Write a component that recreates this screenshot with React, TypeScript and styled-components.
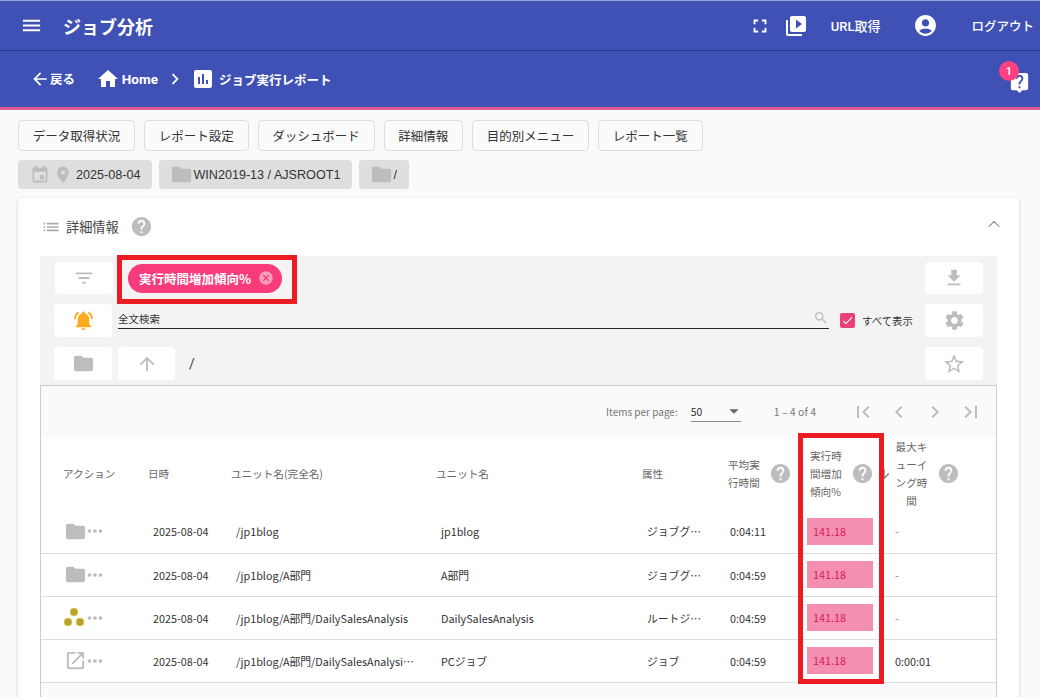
import React from 'react';
import styled, { createGlobalStyle } from 'styled-components';
import { ChevronUp } from 'lucide-react';
import {
  MdMenu, MdArrowBack, MdHome, MdChevronRight, MdChevronLeft, MdAssessment, MdFullscreen, MdVideoLibrary,
  MdAccountCircle, MdLiveHelp, MdEvent, MdPlace, MdFolder, MdList, MdHelp, MdFilterList,
  MdCancel, MdFileDownload, MdNotificationsActive, MdSearch, MdCheck, MdSettings, MdArrowUpward,
  MdStarBorder, MdArrowDropDown, MdFirstPage, MdLastPage, MdMoreHoriz, MdOpenInNew, MdArrowDownward,
} from 'react-icons/md';

const GlobalStyle = createGlobalStyle`
  html, body { margin: 0; padding: 0; height: 100%; overflow: hidden; background: #fafafa; }
  body { font-family: Roboto, "Noto Sans CJK JP", sans-serif; color: #333; }
  * { box-sizing: border-box; }
`;

const Page = styled.div`
  position: relative;
  width: 1040px;
  height: 697px;
  overflow: hidden;
`;

const Header = styled.header`
  background: #3f51b5;
  color: #fff;
  border-top: 1px solid #9aa4d8;
  border-bottom: 3px solid #e05a9a;
`;

const TopBar = styled.div`
  height: 50px;
  padding: 0 6px 0 20px;
  display: flex;
  align-items: center;
  border-bottom: 1px solid #2c3a86;
`;

const Title = styled.h1`
  margin: 0 0 0 20px;
  font-size: 18px;
  font-weight: 700;
  flex: 1;
`;

const TopText = styled.span<{ $left: number; $size: number }>`
  margin-left: ${p => p.$left}px;
  font-size: ${p => p.$size}px;
  font-weight: 500;
`;

const IconSlot = styled.span<{ $left?: number; $color?: string }>`
  margin-left: ${p => p.$left ?? 0}px;
  display: flex;
  flex: none;
  color: ${p => p.$color ?? 'inherit'};
`;

const NavBar = styled.div`
  height: 56px;
  padding: 0 9px 0 30px;
  display: flex;
  align-items: center;
  font-weight: 700;
`;

const NavText = styled.span<{ $size: number; $left?: number }>`
  font-size: ${p => p.$size}px;
  margin-left: ${p => p.$left ?? 0}px;
`;

const HelpBubble = styled.div`
  position: relative;
  margin-left: auto;
  margin-top: 7px;
  display: flex;
`;

const Badge = styled.span`
  position: absolute;
  left: -9px;
  top: -10px;
  width: 20px;
  height: 20px;
  border-radius: 50%;
  background: #ff4081;
  font-size: 11px;
  font-weight: 500;
  display: flex;
  align-items: center;
  justify-content: center;
`;

const Main = styled.main`
  padding: 10px 21px 0 18px;
`;

const ButtonRow = styled.div`
  display: flex;
  gap: 9px;
`;

const TabButton = styled.button`
  height: 31px;
  padding: 0 13.75px;
  background: #fafafa;
  border: 1px solid #ddd;
  border-radius: 4px;
  font-family: "Noto Sans CJK JP", sans-serif;
  font-size: 12.5px;
  color: #333;
`;

const ChipRow = styled.div`
  display: flex;
  gap: 7px;
  margin-top: 9px;
`;

const InfoChip = styled.div<{ $pad: number }>`
  height: 29px;
  padding: 0 12px 0 ${p => p.$pad}px;
  background: #dedede;
  border-radius: 4px;
  display: flex;
  align-items: center;
  font-family: "Liberation Sans", "Noto Sans CJK JP", sans-serif;
  font-size: 12.6px;
  color: #333;
`;

const ChipText = styled.span<{ $left: number }>`
  margin-left: ${p => p.$left}px;
`;

const Card = styled.section`
  margin-top: 9px;
  height: 540px;
  background: #fff;
  box-shadow: 0 1px 3px rgba(0, 0, 0, 0.18);
  padding: 0 22px;
`;

const CardTitle = styled.div`
  height: 58px;
  padding: 0 0 1px 1px;
  display: flex;
  align-items: center;
  font-family: "Noto Sans CJK JP", sans-serif;
  font-size: 13.2px;
  color: #444;
`;

const Collapse = styled.span`
  margin: 0 -7px 6px auto;
  display: flex;
  color: #777;
`;

const Toolbar = styled.div`
  background: #f3f3f3;
  padding: 6px 14px 5px;
  display: flex;
  flex-direction: column;
  gap: 10px;
`;

const ToolRow = styled.div<{ $h?: number }>`
  display: flex;
  align-items: center;
  height: ${p => p.$h ?? 33}px;
`;

const ToolButton = styled.div<{ $w?: number; $h?: number; $left?: number }>`
  width: ${p => p.$w ?? 58}px;
  height: ${p => p.$h ?? 33}px;
  margin-left: ${p => p.$left ?? 0}px;
  flex: none;
  background: #fff;
  border-radius: 4px;
  display: flex;
  align-items: center;
  justify-content: center;
  color: #bdbdbd;
`;

const Highlight = styled.div`
  position: relative;
  margin-left: 15px;
`;

const PinkChip = styled.div`
  height: 29px;
  width: 154px;
  padding: 0 8px 0 11px;
  background: #f83c7b;
  border-radius: 15px;
  color: #fff;
  font-family: "Noto Sans CJK JP", sans-serif;
  font-size: 12.5px;
  font-weight: 700;
  display: flex;
  align-items: center;
  justify-content: space-between;
  svg { color: #f99dbd; }
`;

const RedFrame = styled.div`
  position: absolute;
  border: 5px solid #ec1c24;
  pointer-events: none;
`;

const ChipFrame = styled(RedFrame)`
  left: -11px;
  right: -15px;
  top: -9px;
  bottom: -11px;
`;

const ColumnFrame = styled(RedFrame)`
  left: 798px;
  top: 433px;
  width: 86px;
  height: 251px;
`;

const SearchField = styled.div`
  align-self: flex-start;
  position: relative;
  margin-left: 6px;
  width: 711px;
  height: 25px;
  padding-top: 7px;
  border-bottom: 1px solid #222;
  font-family: "Noto Sans CJK JP", sans-serif;
  font-size: 10.5px;
  line-height: 15px;
  color: #333;
`;

const SearchMark = styled.span`
  position: absolute;
  right: 0;
  top: 6px;
  display: flex;
  color: #bdbdbd;
`;

const Check = styled.span`
  margin-left: 11px;
  width: 15px;
  height: 15px;
  border-radius: 2px;
  background: #ec407a;
  display: flex;
  align-items: center;
  justify-content: center;
  color: #fff;
`;

const CheckLabel = styled.span`
  margin-left: 7px;
  font-family: "Noto Sans CJK JP", sans-serif;
  font-size: 10.4px;
  color: #333;
`;

const PathText = styled.span`
  margin-left: 14px;
  font-size: 14px;
  color: #444;
`;

const RightSlot = styled.div`
  margin-left: auto;
`;

const TableBox = styled.div`
  border-left: 1px solid #ccc;
  border-right: 1px solid #ccc;
  border-top: 1px solid #ccc;
  background: #fafafa;
  height: 320px;
`;

const Paginator = styled.div`
  height: 51px;
  display: flex;
  align-items: center;
  justify-content: flex-end;
  padding-right: 13px;
  font-family: "Noto Sans CJK JP", Roboto, sans-serif;
  font-size: 10.5px;
  color: #777;
`;

const PerPageLabel = styled.span`
  font-size: 10px;
`;

const PageSelect = styled.div`
  margin-left: 13px;
  width: 50px;
  height: 20px;
  border-bottom: 1px solid #888;
  display: flex;
  align-items: center;
  justify-content: space-between;
  color: #333;
  svg { color: #666; margin-right: -4px; }
`;

const RangeText = styled.span`
  margin: 0 35px 0 33px;
`;

const PagerIcons = styled.div`
  display: flex;
  gap: 12px;
  color: #bdbdbd;
`;

const Table = styled.table`
  width: 955px;
  table-layout: fixed;
  border-collapse: collapse;
  background: #fff;
  font-family: "Noto Sans CJK JP", sans-serif;
  font-size: 10.8px;
`;

const HeadCell = styled.th<{ $w: number; $pad?: number }>`
  width: ${p => p.$w}px;
  height: 73px;
  padding: 0 0 0 ${p => p.$pad ?? 5}px;
  text-align: left;
  font-size: 10.6px;
  font-weight: 400;
  color: #666;
  line-height: 18px;
`;

const HeadInner = styled.div`
  display: flex;
  align-items: center;
  color: #bdbdbd;
`;

const HeadLabel = styled.span<{ $center?: boolean }>`
  width: ${p => (p.$center ? 33 : 34)}px;
  flex: none;
  color: #666;
  text-align: ${p => (p.$center ? 'center' : 'left')};
`;

const Row = styled.tr`
  height: 43px;
  border-bottom: 1px solid #ddd;
`;

const Cell = styled.td<{ $pad?: number; $right?: number }>`
  padding: 0 ${p => p.$right ?? 0}px 0 ${p => p.$pad ?? 10}px;
  color: #333;
  white-space: nowrap;
  overflow: hidden;
  text-overflow: ellipsis;
`;

const ActionBox = styled.div`
  display: flex;
  align-items: center;
  padding-left: 22px;
  color: #bdbdbd;
`;

const ActionDots = styled(MdMoreHoriz)`
  flex: none;
  margin-left: -3px;
`;

const TrendCell = styled.td`
  padding: 0 17px 0 2px;
`;

const TrendBar = styled.div`
  height: 27px;
  padding-left: 6px;
  background: #f48fb1;
  color: #d81b60;
  line-height: 27px;
`;

const QueueCell = styled(Cell)<{ $muted?: boolean }>`
  padding-left: 5px;
  color: ${p => (p.$muted ? '#888' : '#333')};
`;

const JobNetIcon = () => (
  <svg width="23" height="24" viewBox="0 0 23 24">
    <circle cx="10" cy="6" r="4" fill="#b8a22d" stroke="#e6de5c" strokeWidth="0.6" />
    <circle cx="4" cy="16" r="4" fill="#b8a22d" stroke="#e6de5c" strokeWidth="0.6" />
    <circle cx="16" cy="16" r="4" fill="#b8a22d" stroke="#e6de5c" strokeWidth="0.6" />
  </svg>
);

const rows = [
  { icon: <MdFolder size={23} />, path: '/jp1blog', name: 'jp1blog', attr: 'ジョブグループ', avg: '0:04:11', queue: '-' },
  { icon: <MdFolder size={23} />, path: '/jp1blog/A部門', name: 'A部門', attr: 'ジョブグループ', avg: '0:04:59', queue: '-' },
  { icon: <JobNetIcon />, path: '/jp1blog/A部門/DailySalesAnalysis', name: 'DailySalesAnalysis', attr: 'ルートジョブネット', avg: '0:04:59', queue: '-' },
  { icon: <MdOpenInNew size={23} />, path: '/jp1blog/A部門/DailySalesAnalysis/PCジョブ', name: 'PCジョブ', attr: 'ジョブ', avg: '0:04:59', queue: '0:00:01' },
];

const tabs = ['データ取得状況', 'レポート設定', 'ダッシュボード', '詳細情報', '目的別メニュー', 'レポート一覧'];

export default function App() {
  return (
    <Page>
      <GlobalStyle />
      <Header>
        <TopBar>
          <MdMenu size={23} />
          <Title>ジョブ分析</Title>
          <IconSlot><MdFullscreen size={22} /></IconSlot>
          <IconSlot $left={13}><MdVideoLibrary size={24} /></IconSlot>
          <TopText $left={23} $size={13}>URL取得</TopText>
          <IconSlot $left={33}><MdAccountCircle size={25} /></IconSlot>
          <TopText $left={33} $size={12.5}>ログアウト</TopText>
        </TopBar>
        <NavBar>
          <MdArrowBack size={20} />
          <NavText $size={12.4}>戻る</NavText>
          <IconSlot $left={21}><MdHome size={24} /></IconSlot>
          <NavText $size={13.5} $left={2}>Home</NavText>
          <IconSlot $left={6}><MdChevronRight size={22} /></IconSlot>
          <IconSlot $left={5}><MdAssessment size={24} /></IconSlot>
          <NavText $size={12.5} $left={4}>ジョブ実行レポート</NavText>
          <HelpBubble>
            <MdLiveHelp size={23} />
            <Badge>1</Badge>
          </HelpBubble>
        </NavBar>
      </Header>
      <Main>
        <ButtonRow>
          {tabs.map(t => <TabButton key={t}>{t}</TabButton>)}
        </ButtonRow>
        <ChipRow>
          <InfoChip $pad={12}>
            <IconSlot $color="#bdbdbd"><MdEvent size={20} /></IconSlot>
            <IconSlot $left={3} $color="#bdbdbd"><MdPlace size={20} /></IconSlot>
            <ChipText $left={3}>2025-08-04</ChipText>
          </InfoChip>
          <InfoChip $pad={11}>
            <IconSlot $color="#bdbdbd"><MdFolder size={23} /></IconSlot>
            <ChipText $left={0}>WIN2019-13 / AJSROOT1</ChipText>
          </InfoChip>
          <InfoChip $pad={11}>
            <IconSlot $color="#bdbdbd"><MdFolder size={23} /></IconSlot>
            <ChipText $left={0}>/</ChipText>
          </InfoChip>
        </ChipRow>
        <Card>
          <CardTitle>
            <IconSlot $color="#aaa"><MdList size={20} /></IconSlot>
            <ChipText $left={5}>詳細情報</ChipText>
            <IconSlot $left={11} $color="#bdbdbd"><MdHelp size={23} /></IconSlot>
            <Collapse><ChevronUp size={20} strokeWidth={1.25} /></Collapse>
          </CardTitle>
          <Toolbar>
            <ToolRow $h={32}>
              <ToolButton $left={1} $h={32}><MdFilterList size={22} /></ToolButton>
              <Highlight>
                <PinkChip>
                  実行時間増加傾向%
                  <MdCancel size={16} />
                </PinkChip>
                <ChipFrame />
              </Highlight>
              <RightSlot><ToolButton $h={32}><MdFileDownload size={22} /></ToolButton></RightSlot>
            </ToolRow>
            <ToolRow>
              <ToolButton><MdNotificationsActive size={23} color="#ffa91f" /></ToolButton>
              <SearchField>
                全文検索
                <SearchMark><MdSearch size={16} /></SearchMark>
              </SearchField>
              <Check><MdCheck size={13} /></Check>
              <CheckLabel>すべて表示</CheckLabel>
              <RightSlot><ToolButton><MdSettings size={23} /></ToolButton></RightSlot>
            </ToolRow>
            <ToolRow>
              <ToolButton><MdFolder size={23} /></ToolButton>
              <ToolButton $w={57} $left={6}><MdArrowUpward size={22} /></ToolButton>
              <PathText>/</PathText>
              <RightSlot><ToolButton><MdStarBorder size={24} /></ToolButton></RightSlot>
            </ToolRow>
          </Toolbar>
          <TableBox>
            <Paginator>
              <PerPageLabel>Items per page:</PerPageLabel>
              <PageSelect>
                50
                <MdArrowDropDown size={22} />
              </PageSelect>
              <RangeText>1 – 4 of 4</RangeText>
              <PagerIcons>
                <MdFirstPage size={24} />
                <MdChevronLeft size={24} />
                <MdChevronRight size={24} />
                <MdLastPage size={24} />
              </PagerIcons>
            </Paginator>
            <Table>
              <thead>
                <tr>
                  <HeadCell $w={102} $pad={22}>アクション</HeadCell>
                  <HeadCell $w={83}>日時</HeadCell>
                  <HeadCell $w={205}>ユニット名(完全名)</HeadCell>
                  <HeadCell $w={206}>ユニット名</HeadCell>
                  <HeadCell $w={86}>属性</HeadCell>
                  <HeadCell $w={82}>
                    <HeadInner>
                      <HeadLabel>平均実行時間</HeadLabel>
                      <IconSlot $left={7}><MdHelp size={23} /></IconSlot>
                    </HeadInner>
                  </HeadCell>
                  <HeadCell $w={85}>
                    <HeadInner>
                      <HeadLabel>実行時間増加傾向%</HeadLabel>
                      <IconSlot $left={7}><MdHelp size={23} /></IconSlot>
                      <IconSlot $left={2} $color="#777"><MdArrowDownward size={16} /></IconSlot>
                    </HeadInner>
                  </HeadCell>
                  <HeadCell $w={106}>
                    <HeadInner>
                      <HeadLabel $center>最大キューイング時間</HeadLabel>
                      <IconSlot $left={9}><MdHelp size={23} /></IconSlot>
                    </HeadInner>
                  </HeadCell>
                </tr>
              </thead>
              <tbody>
                {rows.map(r => (
                  <Row key={r.path}>
                    <td>
                      <ActionBox>
                        {r.icon}
                        <ActionDots size={22} />
                      </ActionBox>
                    </td>
                    <Cell>2025-08-04</Cell>
                    <Cell $right={14}>{r.path}</Cell>
                    <Cell $right={14}>{r.name}</Cell>
                    <Cell $right={20}>{r.attr}</Cell>
                    <Cell $pad={7}>{r.avg}</Cell>
                    <TrendCell><TrendBar>141.18</TrendBar></TrendCell>
                    <QueueCell $muted={r.queue === '-'}>{r.queue}</QueueCell>
                  </Row>
                ))}
              </tbody>
            </Table>
          </TableBox>
        </Card>
      </Main>
      <ColumnFrame />
    </Page>
  );
}
